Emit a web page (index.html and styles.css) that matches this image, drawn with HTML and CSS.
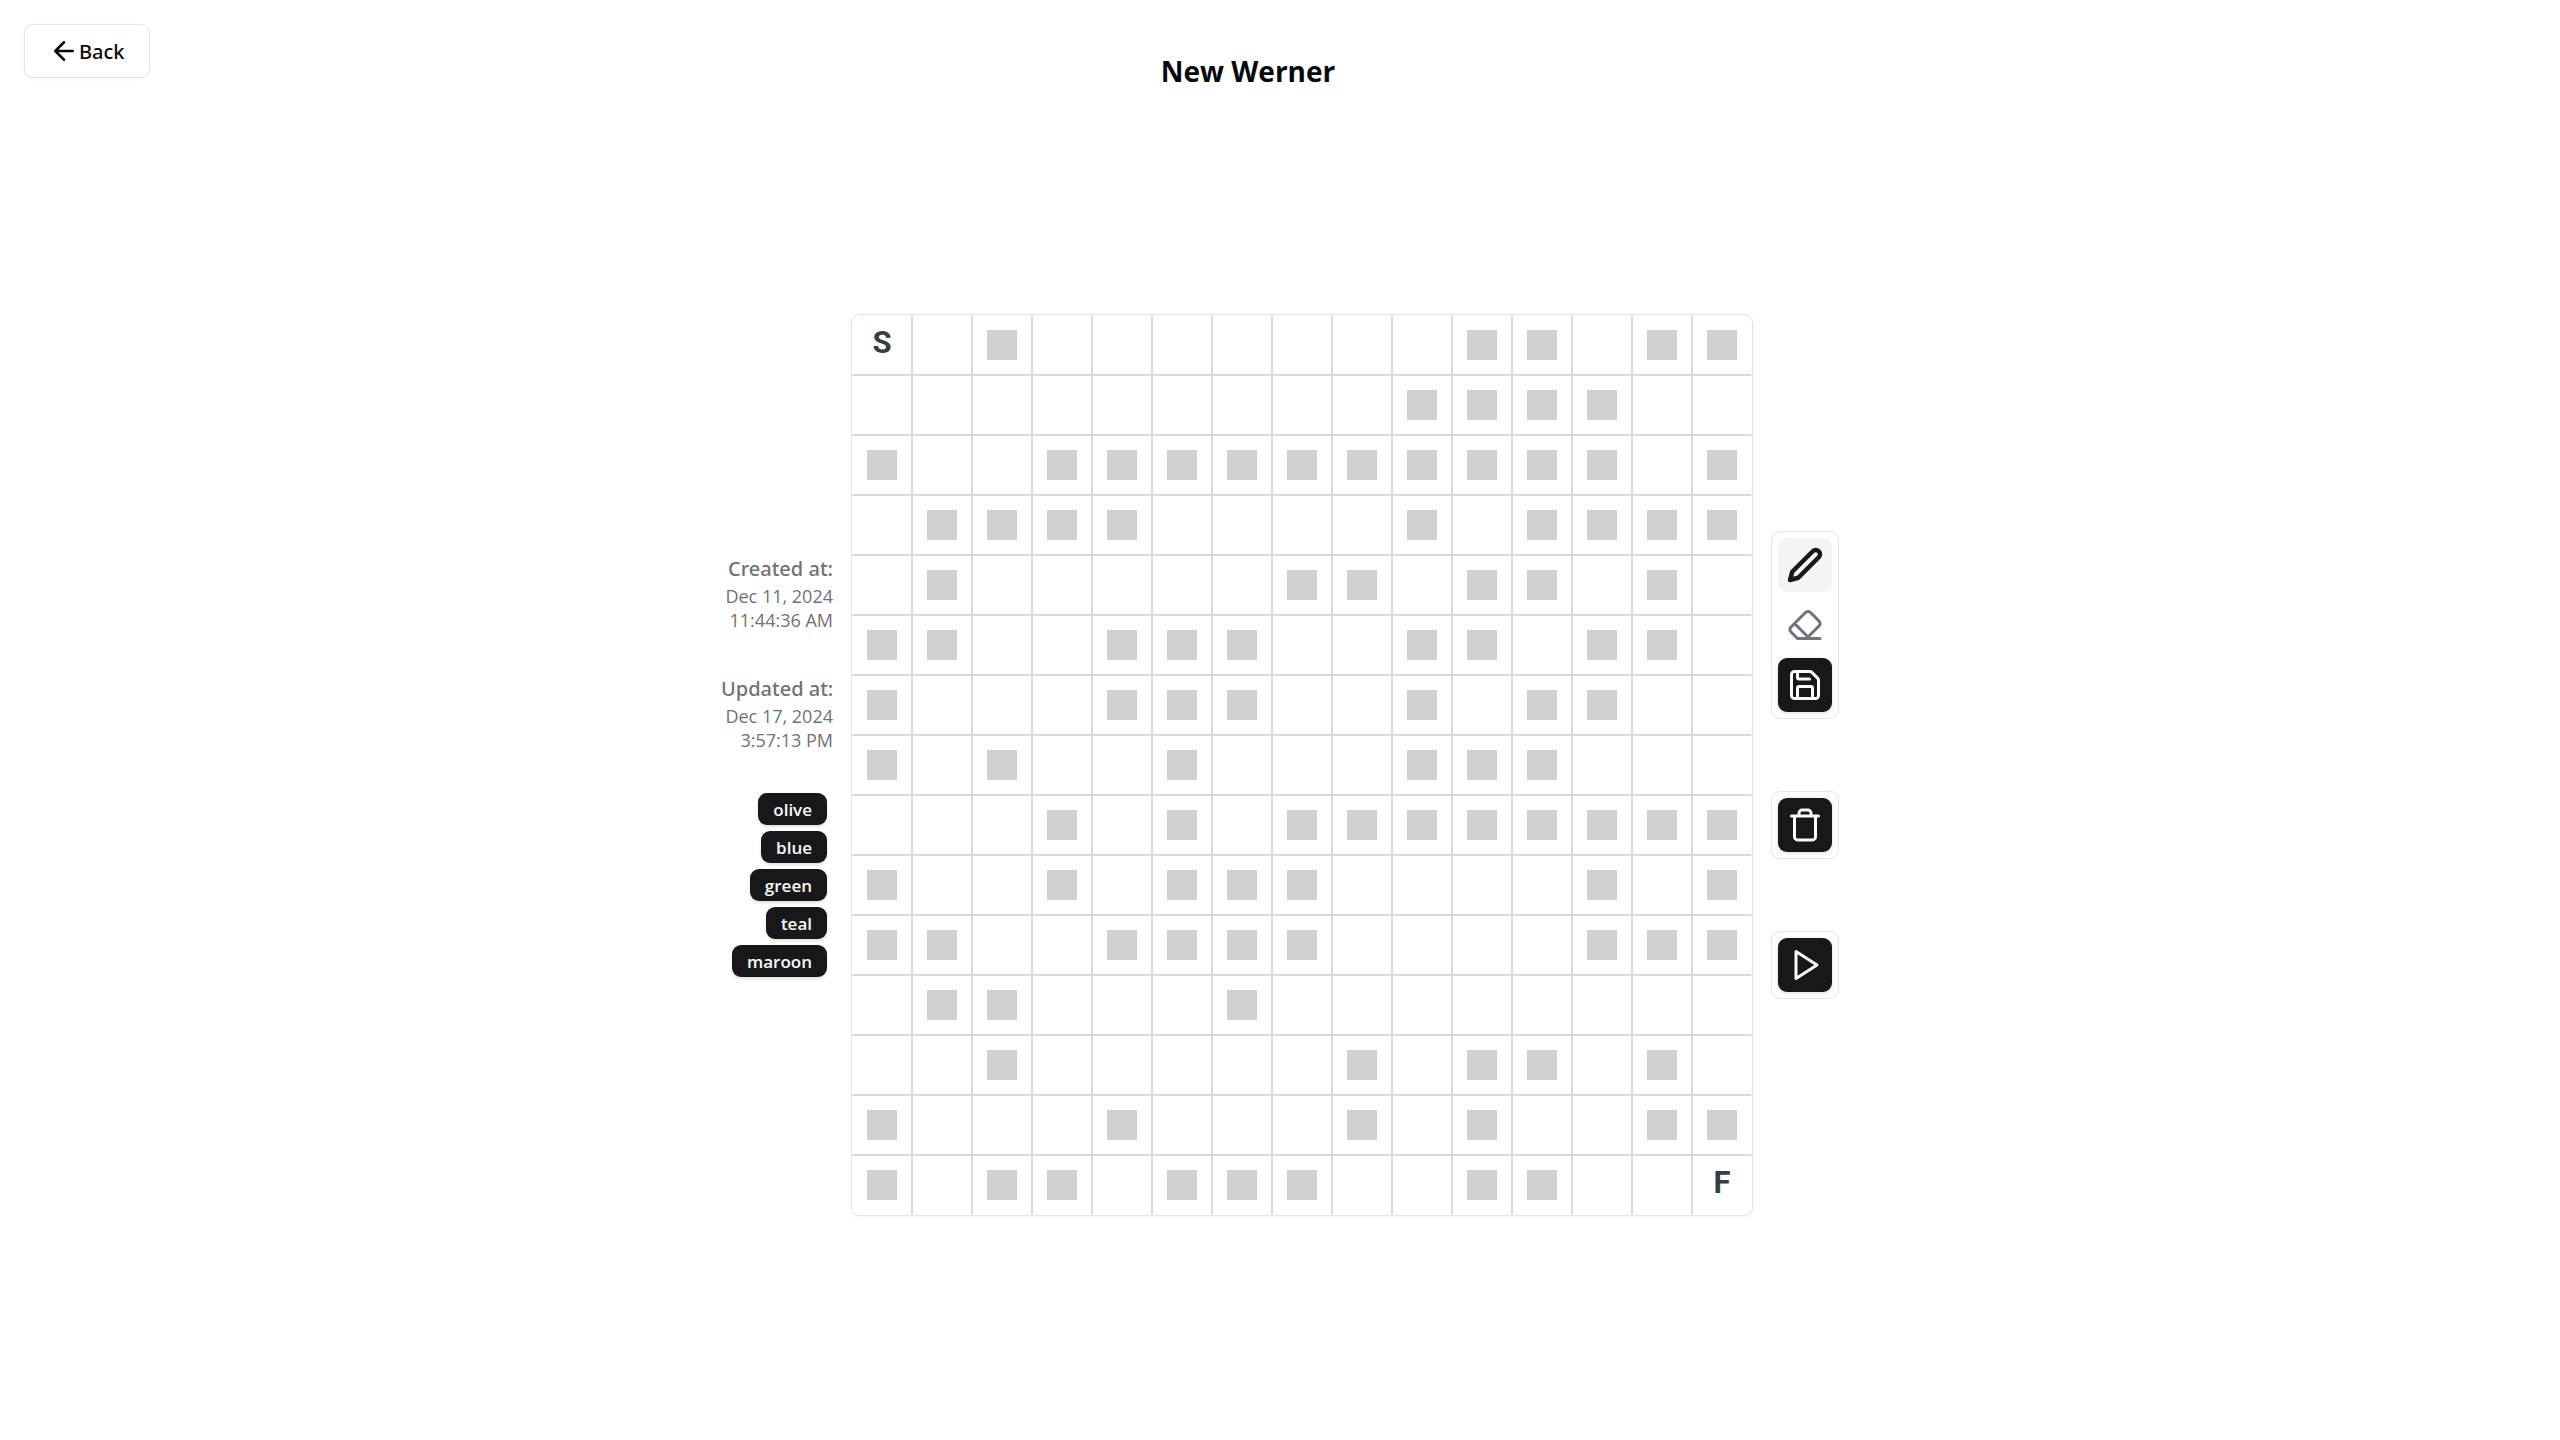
FILE: index.html
```html
<!DOCTYPE html>
<html lang="en">
<head>
<meta charset="utf-8">
<meta name="viewport" content="width=device-width, initial-scale=1">
<title>New Werner</title>
<link rel="stylesheet" href="styles.css">
</head>
<body>
<div class="page">
  <header class="header">
    <button class="back" type="button"><svg class="icon icon-back" viewBox="0 0 24 24" aria-hidden="true"><path d="m12 19-7-7 7-7M19 12H5"/></svg>Back</button>
    <h1 class="title">New Werner</h1>
  </header>
  <main class="workspace">
    <aside class="meta">
      <section class="stamp">
        <h2 class="stamp-label">Created at:</h2>
        <p class="stamp-value">Dec 11, 2024</p>
        <p class="stamp-value">11:44:36 AM</p>
      </section>
      <section class="stamp">
        <h2 class="stamp-label">Updated at:</h2>
        <p class="stamp-value">Dec 17, 2024</p>
        <p class="stamp-value">3:57:13 PM</p>
      </section>
      <ul class="tags">
        <li class="tag">olive</li>
        <li class="tag">blue</li>
        <li class="tag">green</li>
        <li class="tag">teal</li>
        <li class="tag">maroon</li>
      </ul>
    </aside>
    <div class="board" id="board"></div>
    <div class="tools">
      <div class="toolbox">
        <button class="tool tool-active" type="button" aria-label="Draw" aria-pressed="true"><svg class="icon icon-bold" viewBox="0 0 24 24"><path d="M17 3a2.85 2.83 0 1 1 4 4L7.5 20.5 2 22l1.5-5.5Z"/></svg></button>
        <button class="tool" type="button" aria-label="Erase" aria-pressed="false"><svg class="icon" viewBox="0 0 24 24"><path d="m7 21-4.3-4.3c-1-1-1-2.5 0-3.4l9.6-9.6c1-1 2.5-1 3.4 0l5.6 5.6c1 1 1 2.5 0 3.4L13 21M22 21H7M5 11l9 9"/></svg></button>
        <button class="tool tool-solid" type="button" aria-label="Save"><svg class="icon" viewBox="0 0 24 24"><path d="M15.2 3a2 2 0 0 1 1.4.6l3.8 3.8a2 2 0 0 1 .6 1.4V19a2 2 0 0 1-2 2H5a2 2 0 0 1-2-2V5a2 2 0 0 1 2-2z"/><path d="M17 21v-7a1 1 0 0 0-1-1H8a1 1 0 0 0-1 1v7M7 3v4a1 1 0 0 0 1 1h7"/></svg></button>
      </div>
      <div class="toolbox">
        <button class="tool tool-solid" type="button" aria-label="Delete"><svg class="icon" viewBox="0 0 24 24"><path d="M3 6h18M19 6v14c0 1-1 2-2 2H7c-1 0-2-1-2-2V6M8 6V4c0-1 1-2 2-2h4c1 0 2 1 2 2v2"/></svg></button>
      </div>
      <div class="toolbox">
        <button class="tool tool-solid" type="button" aria-label="Play"><svg class="icon" viewBox="0 0 24 24"><path d="m6 3 14 9-14 9z"/></svg></button>
      </div>
    </div>
  </main>
</div>
<script src="board.js"></script>
</body>
</html>
```

FILE: styles.css
```css
* {
  box-sizing: border-box;
}

body {
  margin: 0;
  background: #fff;
  color: #09090b;
  font-family: "Open Sans", "Noto Sans", sans-serif;
}

h1, h2, p, ul {
  margin: 0;
  padding: 0;
}

button {
  padding: 0;
  border: 0;
  background: none;
  color: inherit;
  font: inherit;
  cursor: pointer;
}

.page {
  display: flex;
  flex-direction: column;
  min-height: 100vh;
}

.header {
  display: grid;
  grid-template-columns: 1fr auto 1fr;
  align-items: start;
  padding: 24px 88px 0 24px;
}

.back {
  display: flex;
  align-items: center;
  justify-self: start;
  height: 54px;
  padding: 0 24px;
  border: 1px solid #e4e4e7;
  border-radius: 9px;
  background: #fff;
  box-shadow: 0 1px 3px rgba(0, 0, 0, 0.06);
  font-family: "Noto Sans", "Open Sans", sans-serif;
  font-size: 20px;
  font-weight: 500;
}

.title {
  padding-top: 28px;
  font-size: 28px;
  font-weight: 700;
  line-height: 38px;
}

.icon {
  width: 36px;
  height: 36px;
  fill: none;
  stroke: currentColor;
  stroke-width: 2;
  stroke-linecap: round;
  stroke-linejoin: round;
}

.icon-back {
  width: 30px;
  height: 30px;
}

.icon-bold {
  stroke-width: 3;
}

.workspace {
  display: flex;
  flex: 1;
  align-items: center;
  justify-content: center;
  gap: 18px;
}

.meta {
  display: flex;
  flex-direction: column;
  gap: 41px;
  width: 112px;
  color: #71717a;
  text-align: right;
  white-space: nowrap;
}

.stamp-label {
  font-family: "Noto Sans", "Open Sans", sans-serif;
  font-size: 20px;
  font-weight: 500;
  line-height: 31px;
}

.stamp-value {
  font-size: 18px;
  line-height: 24px;
}

.tags {
  display: flex;
  flex-direction: column;
  align-items: flex-end;
  gap: 6px;
  padding-right: 6px;
  list-style: none;
}

.tag {
  padding: 1px 15px 0;
  border-radius: 9px;
  background: #18181b;
  box-shadow: 0 2px 3px rgba(0, 0, 0, 0.12);
  color: #fafafa;
  font-size: 17px;
  font-weight: 600;
  line-height: 31px;
}

.board {
  display: grid;
  grid-template-columns: repeat(15, 60px);
  grid-auto-rows: 60px;
  overflow: hidden;
  border: 1px solid #e4e4e7;
  border-radius: 9px;
  box-shadow: 0 1px 4px rgba(0, 0, 0, 0.06);
}

.cell {
  display: grid;
  place-items: center;
  border: 1px solid #dadadc;
}

.cell:nth-child(-n + 15) {
  border-top-color: transparent;
}

.cell:nth-child(n + 211) {
  border-bottom-color: transparent;
}

.cell:nth-child(15n + 1) {
  border-left-color: transparent;
}

.cell:nth-child(15n) {
  border-right-color: transparent;
}

.wall {
  width: 30px;
  height: 30px;
  background: #d0d0d2;
}

.mark {
  padding-bottom: 6px;
  color: #3b3c3e;
  font: 700 31px/1 Roboto, "Liberation Sans", sans-serif;
}

.tools {
  display: flex;
  flex-direction: column;
  gap: 72px;
}

.toolbox {
  display: flex;
  flex-direction: column;
  gap: 6px;
  padding: 6px;
  border: 1px solid #e4e4e7;
  border-radius: 9px;
}

.tool {
  display: grid;
  place-items: center;
  width: 54px;
  height: 54px;
  border-radius: 9px;
  color: #71717a;
}

.tool-active {
  background: #f4f4f5;
  color: #18181b;
}

.tool-solid {
  background: #18181b;
  box-shadow: 0 1px 4px rgba(0, 0, 0, 0.15);
  color: #fafafa;
}
```

FILE: board.js
```js
// One string per row: "#" is a wall, "." is open, "S" the start, "F" the finish.
const rows = [
  "S.#.......##.##",
  ".........####..",
  "#..##########.#",
  ".####....#.####",
  ".#.....##.##.#.",
  "##..###..##.##.",
  "#...###..#.##..",
  "#.#..#...###...",
  "...#.#.########",
  "#..#.###....#.#",
  "##..####....###",
  ".##...#........",
  "..#.....#.##.#.",
  "#...#...#.#..##",
  "#.##.###..##..F",
];

const board = document.getElementById("board");
for (const kind of rows.join("")) {
  const cell = document.createElement("div");
  cell.className = "cell";
  if (kind !== ".") {
    const item = document.createElement("span");
    item.className = kind === "#" ? "wall" : "mark";
    if (kind !== "#") item.textContent = kind;
    cell.append(item);
  }
  board.append(cell);
}
```
